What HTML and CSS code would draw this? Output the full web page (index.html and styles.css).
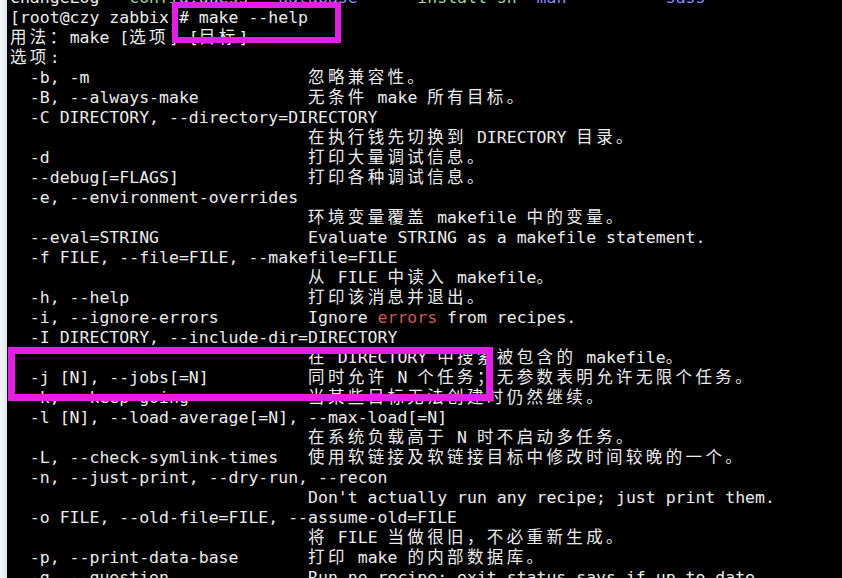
FILE: index.html
```html
<!DOCTYPE html>
<html>
<head>
    <title>make --help</title>
    <meta charset="utf-8">
    <link rel="stylesheet" href="styles.css">
</head>
<body>
    <div class="screen">
        <div class="edge"></div>
        <div class="term">
<pre class="output">ChangeLog   <span class="exec">config.guess</span>   <span class="dir">database</span>      <span class="exec">install-sh</span>  <span class="dir">man</span>          <span class="dir">sass</span>
[root@czy zabbix]# make --help
<span class="zh">用法：</span>make [<span class="zh">选项</span>] [<span class="zh">目标</span>]
<span class="zh">选项</span>:
  -b, -m                      <span class="zh">忽略兼容性。</span>
  -B, --always-make           <span class="zh">无条件</span> make <span class="zh">所有目标。</span>
  -C DIRECTORY, --directory=DIRECTORY
                              <span class="zh">在执行钱先切换到</span> DIRECTORY <span class="zh">目录。</span>
  -d                          <span class="zh">打印大量调试信息。</span>
  --debug[=FLAGS]             <span class="zh">打印各种调试信息。</span>
  -e, --environment-overrides
                              <span class="zh">环境变量覆盖</span> makefile <span class="zh">中的变量。</span>
  --eval=STRING               Evaluate STRING as a makefile statement.
  -f FILE, --file=FILE, --makefile=FILE
                              <span class="zh">从</span> FILE <span class="zh">中读入</span> makefile<span class="zh">。</span>
  -h, --help                  <span class="zh">打印该消息并退出。</span>
  -i, --ignore-errors         Ignore <span class="hit">errors</span> from recipes.
  -I DIRECTORY, --include-dir=DIRECTORY
                              <span class="zh">在</span> DIRECTORY <span class="zh">中搜索被包含的</span> makefile<span class="zh">。</span>
  -j [N], --jobs[=N]          <span class="zh">同时允许</span> N <span class="zh">个任务；无参数表明允许无限个任务。</span>
  -k, --keep-going            <span class="zh">当某些目标无法创建时仍然继续。</span>
  -l [N], --load-average[=N], --max-load[=N]
                              <span class="zh">在系统负载高于</span> N <span class="zh">时不启动多任务。</span>
  -L, --check-symlink-times   <span class="zh">使用软链接及软链接目标中修改时间较晚的一个。</span>
  -n, --just-print, --dry-run, --recon
                              Don't actually run any recipe; just print them.
  -o FILE, --old-file=FILE, --assume-old=FILE
                              <span class="zh">将</span> FILE <span class="zh">当做很旧，不必重新生成。</span>
  -p, --print-data-base       <span class="zh">打印</span> make <span class="zh">的内部数据库。</span>
  -q, --question              Run no recipe; exit status says if up to date.
</pre>
            <!-- annotation boxes drawn over the screenshot -->
            <div class="mark mark-cmd"></div>
            <div class="mark mark-jobs"></div>
        </div>
    </div>
</body>
</html>
```

FILE: styles.css
```css
body {
    margin: 0;
    background: #000;
    overflow: hidden;
}
.screen {
    display: flex;
    height: 578px;
}
.edge {
    width: 7px;
    background: linear-gradient(to right, #f6f8fa, #dfe7ef);
}
.term {
    flex: 1;
    position: relative;
    background: #000;
    overflow: hidden;
}
.output {
    margin: -12px 0 0 3px;
    font-family: "DejaVu Sans Mono", "Noto Sans CJK SC", monospace;
    font-size: 16.5px;
    line-height: 20px;
    color: #ececec;
    white-space: pre;
}
.zh {
    font-family: "Noto Sans CJK SC", sans-serif;
    line-height: 14px;
    letter-spacing: 3.37px;
}
.exec {
    color: #9fd89a;
}
.dir {
    color: #8a8cff;
}
.hit {
    color: #d2555c;
}
.mark {
    position: absolute;
    box-sizing: border-box;
    border: 6px solid #e41fe4;
}
.mark-cmd {
    left: 165px;
    top: 2px;
    width: 169px;
    height: 41px;
}
.mark-jobs {
    left: 1px;
    top: 347px;
    width: 485px;
    height: 54px;
    border-width: 7px;
}
```
